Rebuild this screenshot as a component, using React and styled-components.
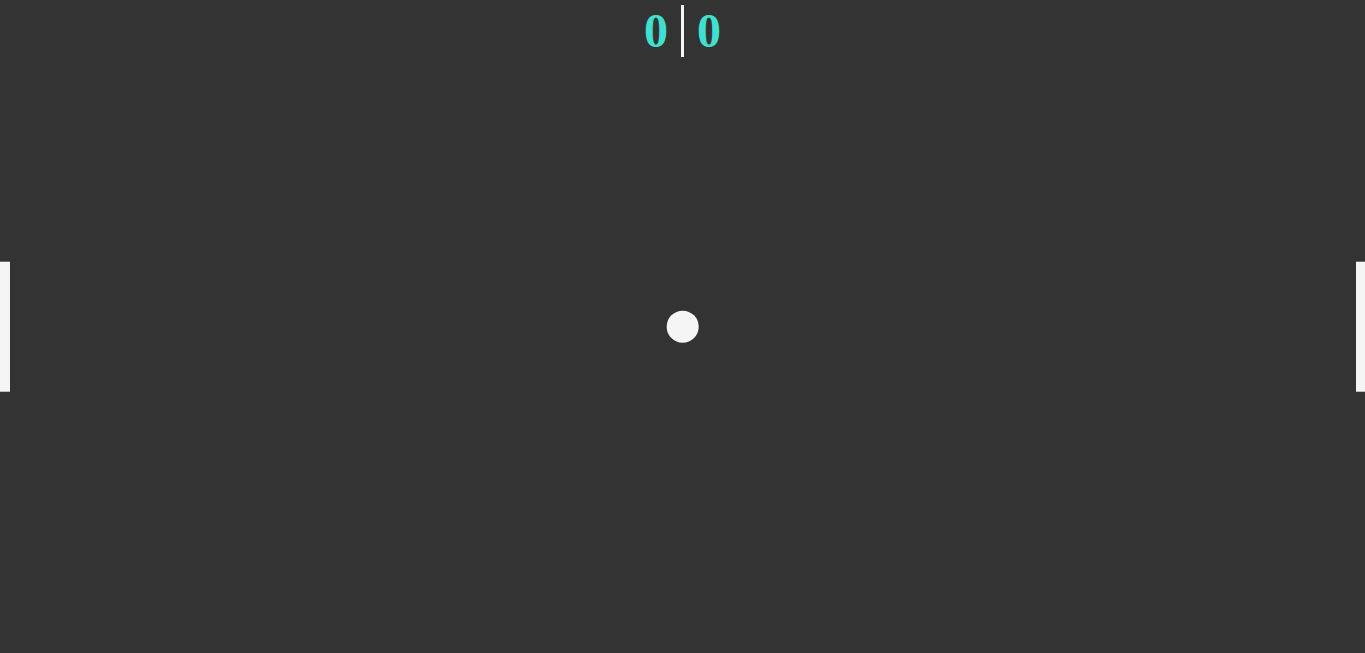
import React from "react";
import styled, { createGlobalStyle } from "styled-components";

const Global = createGlobalStyle`
  html, body { margin: 0; padding: 0; background: #333333; overflow: hidden; }
  #root { height: 100vh; }
`;

const Court = styled.div`
  position: relative;
  height: 100vh;
  width: 100vw;
  background: #333333;
  display: flex;
  flex-direction: column;
  align-items: center;
`;

const Score = styled.div`
  display: flex;
  align-items: stretch;
  margin-top: 5px;
  height: 52px;
  font-family: "Liberation Serif", "Times New Roman", serif;
  font-weight: 700;
  font-size: 48px;
  color: #40e0d0;
`;

const Points = styled.span`
  display: flex;
  align-items: center;
  padding: ${(p) => (p.$side === "left" ? "0 13px 0 0" : "0 0 0 13px")};
  line-height: 1;
`;

const Divider = styled.div`
  width: 3px;
  background: #f5f5f5;
`;

const Paddle = styled.div`
  position: absolute;
  top: 50%;
  transform: translateY(-50%);
  ${(p) => (p.$side === "left" ? "left: 0;" : "right: 0;")}
  width: ${(p) => p.$w}px;
  height: 20vh;
  background: #f5f5f5;
`;

const Ball = styled.div`
  position: absolute;
  left: 50%;
  top: 50%;
  width: 5vh;
  height: 5vh;
  border-radius: 50%;
  background: #f5f5f5;
  transform: translate(-50%, -50%);
`;

export default function App() {
  return (
    <>
      <Global />
      <Court>
        <Score>
          <Points $side="left">0</Points>
          <Divider />
          <Points $side="right">0</Points>
        </Score>
        <Paddle $side="left" $w={10} />
        <Ball />
        <Paddle $side="right" $w={9} />
      </Court>
    </>
  );
}
